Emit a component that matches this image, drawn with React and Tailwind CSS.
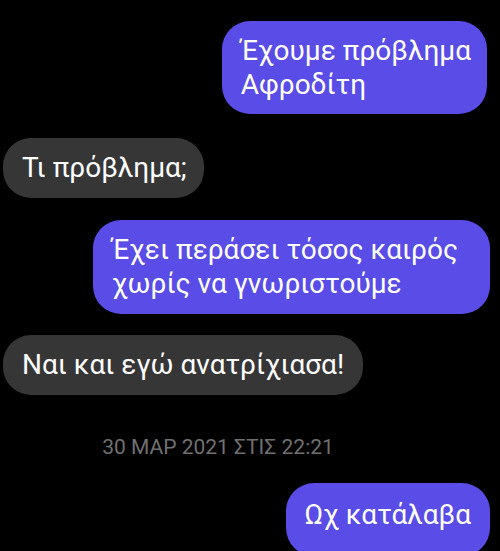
const Bubble = ({ mine, children, className = "" }) => (
  <div
    className={`rounded-[28px] px-[19px] py-[13px] text-[28px] leading-[34px] text-white ${
      mine ? "self-end bg-[#5a4ce6]" : "self-start bg-[#363636]"
    } ${className}`}
  >
    {children}
  </div>
);

export default function App() {
  return (
    <div
      className="flex h-[551px] w-[500px] flex-col overflow-hidden bg-black"
      style={{ fontFamily: "Roboto, 'Noto Sans', sans-serif" }}
    >
      <div className="h-[2px] bg-[#2a2a2a]" />
      <div className="flex flex-col px-[3px] pr-[10px] pt-[21px]">
        <Bubble mine className="mr-[3px] pb-[12px] pr-[16px]">
          Έχουμε πρόβλημα
          <br />
          Αφροδίτη
        </Bubble>
        <Bubble className="mt-[24px] pr-[17px]">Τι πρόβλημα;</Bubble>
        <Bubble mine className="mt-[22px] w-[397px]">
          Έχει περάσει τόσος καιρός
          <br />
          χωρίς να γνωριστούμε
        </Bubble>
        <Bubble className="mt-[21px]">Ναι και εγώ ανατρίχιασα!</Bubble>
        <div className="mt-[38px] pr-[57px] text-center text-[21px] leading-[28px] text-[#707070]">
          30 MAP 2021 ΣΤΙΣ 22:21
        </div>
        <Bubble mine className="mt-[22px] pb-[24px] pt-[15px]">
          Ωχ κατάλαβα
        </Bubble>
      </div>
    </div>
  );
}
